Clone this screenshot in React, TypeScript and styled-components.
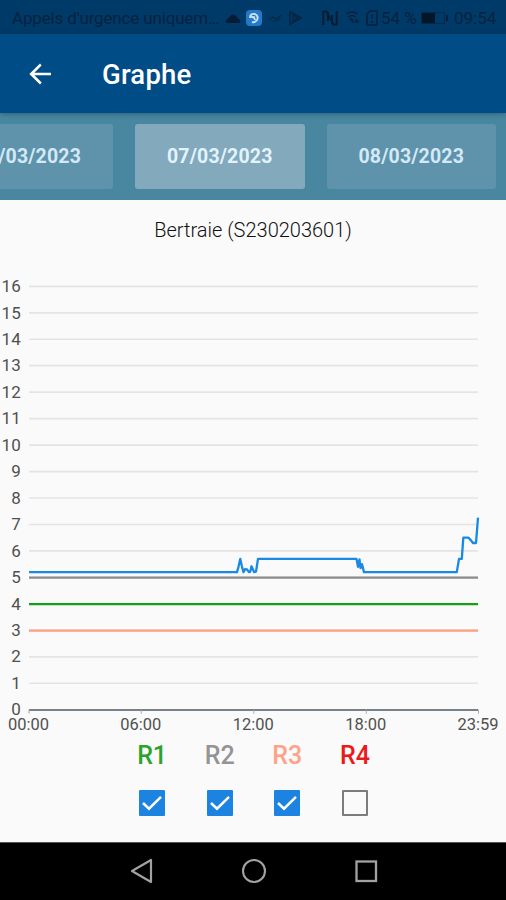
import React, { useState } from "react";
import styled, { createGlobalStyle } from "styled-components";

const GlobalStyle = createGlobalStyle`
  * { box-sizing: border-box; }
  body { margin: 0; background: #fafafa; font-family: Roboto, "Liberation Sans", sans-serif; }
`;

const Screen = styled.div`
  width: 506px;
  height: 900px;
  display: flex;
  flex-direction: column;
  overflow: hidden;
  background: #fafafa;
`;

const StatusBar = styled.div`
  height: 34px;
  flex: none;
  display: flex;
  align-items: center;
  padding: 2px 0 0 12px;
  background: #003a68;
  color: #06223f;
  font-size: 17px;
  white-space: nowrap;
`;

const StatusText = styled.span<{ $width: number; $spacing?: number; $gap?: number }>`
  width: ${(p) => p.$width}px;
  flex: none;
  margin-left: ${(p) => p.$gap ?? 0}px;
  letter-spacing: ${(p) => p.$spacing ?? 0}px;
`;

const StatusIcon = styled.svg<{ $gap: number }>`
  flex: none;
  display: block;
  margin-left: ${(p) => p.$gap}px;
  overflow: visible;
`;

const AppBar = styled.header`
  height: 79px;
  flex: none;
  display: flex;
  align-items: center;
  padding-left: 24px;
  gap: 46px;
  background: #004c87;
  z-index: 1;
  box-shadow: 0 1px 5px rgba(0, 40, 60, 0.4);
`;

const BackButton = styled.button`
  width: 32px;
  height: 32px;
  padding: 0;
  border: 0;
  background: none;
  svg { display: block; }
`;

const Title = styled.h1`
  margin: 2px 0 0;
  color: #fff;
  font-size: 27.5px;
  line-height: 32px;
  font-weight: 500;
  letter-spacing: 0.2px;
`;

const DateStrip = styled.nav`
  height: 87px;
  flex: none;
  display: flex;
  justify-content: flex-end;
  gap: 22px;
  padding: 11px 10px 11px 0;
  background: #4987a0;
  overflow: hidden;
`;

const DateButton = styled.button<{ $active?: boolean }>`
  width: 169.5px;
  height: 65px;
  flex: none;
  padding: 0;
  border: 0;
  border-radius: 3px;
  background: ${(p) => (p.$active ? "#82a9bc" : "#5e93ab")};
  color: ${(p) => (p.$active ? "#e3f3fc" : "#d3e9f6")};
  font: 700 19.5px Roboto, sans-serif;
  letter-spacing: 0.15px;
`;

const Content = styled.main`
  flex: 1;
  display: flex;
  flex-direction: column;
  align-items: center;
`;

const StationName = styled.h2`
  margin: 18px 0 0;
  height: 24px;
  font-size: 20px;
  line-height: 24px;
  font-weight: 300;
  color: #111;
  letter-spacing: 0;
`;

const ChartSvg = styled.svg`
  display: block;
  flex: none;
  margin-top: 25px;
`;

const AxisLabel = styled.text`
  font-family: Roboto, sans-serif;
  font-size: 17px;
  fill: #505050;
`;

const Legend = styled.div`
  display: flex;
  margin: 3px 0 0 1px;
`;

const LegendItem = styled.label`
  width: 67.6px;
  display: flex;
  flex-direction: column;
  align-items: center;
`;

const LegendName = styled.span<{ $color: string }>`
  color: ${(p) => p.$color};
  font-size: 25px;
  line-height: 30px;
  height: 30px;
  font-weight: 500;
`;

const Box = styled.button<{ $checked: boolean }>`
  width: 26px;
  height: 26px;
  margin-top: 19px;
  padding: 0;
  border: ${(p) => (p.$checked ? "0" : "2.5px solid #7c7c7c")};
  border-radius: 1px;
  background: ${(p) => (p.$checked ? "#1c84e0" : "transparent")};
  svg { display: block; }
`;

const NavBar = styled.footer`
  height: 58px;
  flex: none;
  display: flex;
  justify-content: center;
  align-items: center;
  gap: 88px;
  padding: 0 0 2px 1px;
  background: #000;
  border-top: 1px solid #555;
  svg { display: block; overflow: visible; }
`;

const TOP = 267;
const X0 = 29;
const X1 = 478;
const yOf = (v: number) => 709.7 - TOP - v * 26.46;

const levels: [number, number][] = [
  [29, 5.2], [237, 5.2], [238.5, 5.4], [240.3, 5.7], [242, 5.4], [243.5, 5.2],
  [245, 5.31], [247, 5.3], [249, 5.2], [250.3, 5.22], [251.5, 5.42], [253, 5.3],
  [254, 5.2], [256, 5.22], [258, 5.7], [356.5, 5.7], [358, 5.4], [359.5, 5.68],
  [360.5, 5.35], [362, 5.5], [364, 5.2], [456.8, 5.2], [459, 5.7], [461.8, 5.7],
  [463.3, 6.5], [468.5, 6.5], [471, 6.4], [473, 6.3], [476, 6.3], [478, 7.26],
];

const ticks: [number, string][] = [
  [29, "00:00"], [141.3, "06:00"], [253.8, "12:00"], [366.3, "18:00"], [478.5, "23:59"],
];

const thresholds = [
  { name: "R1", level: 4, color: "#2ca32c", line: "#14a014" },
  { name: "R2", level: 5, color: "#949494", line: "#8b8b8b" },
  { name: "R3", level: 3, color: "#ffa287", line: "#ff9e82" },
  { name: "R4", level: 2, color: "#ea1a1a", line: "#ea1a1a" },
];

function LevelChart({ shown }: { shown: boolean[] }) {
  return (
    <ChartSvg width="506" height="471" viewBox="0 0 506 471">
      {Array.from({ length: 17 }, (_, n) => (
        <g key={n}>
          {n > 0 && (
            <line x1={X0} x2={X1} y1={yOf(n)} y2={yOf(n)} stroke="#e4e4e4" strokeWidth="1.7" />
          )}
          <AxisLabel x={20.7} y={yOf(n) + 5.7} textAnchor="end">{n}</AxisLabel>
        </g>
      ))}
      {thresholds.map((t, i) =>
        shown[i] ? (
          <line key={t.name} x1={X0} x2={X1} y1={yOf(t.level) + 0.3} y2={yOf(t.level) + 0.3} stroke={t.line} strokeWidth="2.2" />
        ) : null
      )}
      <polyline
        points={levels.map(([x, v]) => `${x},${yOf(v)}`).join(" ")}
        fill="none"
        stroke="#1889e5"
        strokeWidth="2.3"
        strokeLinejoin="round"
      />
      <line x1={X0} x2={X1} y1={yOf(0) + 0.3} y2={yOf(0) + 0.3} stroke="#78808a" strokeWidth="2" />
      {ticks.map(([x, label]) => (
        <g key={label}>
          <line x1={x} x2={x} y1={yOf(0)} y2={yOf(0) + 4} stroke="#aaa" strokeWidth="1" />
          <AxisLabel x={x - 0.5} y={yOf(0) + 20} textAnchor="middle" textLength="41" lengthAdjust="spacingAndGlyphs">{label}</AxisLabel>
        </g>
      ))}
    </ChartSvg>
  );
}

export default function App() {
  const [shown, setShown] = useState([true, true, true, false]);
  const toggle = (i: number) => setShown((s) => s.map((v, j) => (j === i ? !v : v)));

  return (
    <Screen>
      <GlobalStyle />
      <StatusBar>
        <StatusText $width={207} $spacing={-0.16}>Appels d'urgence uniquem…</StatusText>
        <StatusIcon $gap={6} width="16" height="11" viewBox="0 0 16 11">
          <path d="M1 10Q0 6 4 5Q6 0 10 2Q12 3 12 5Q16 6 15 10Z" fill="#071d35" />
        </StatusIcon>
        <StatusIcon $gap={5} width="16" height="16" viewBox="0 0 16 16">
          <rect width="16" height="16" rx="4" fill="#2479c9" />
          <path d="M4 8Q4 3 9 4Q13 6 11 10Q9 13 6 12M4 5Q6 8 8 7L9 10" fill="none" stroke="#c9e2f6" strokeWidth="1.9" />
        </StatusIcon>
        <StatusIcon $gap={7} width="14" height="8" viewBox="0 0 14 8">
          <path d="M0 6L4 3L7 5L13 1M2 7H8L11 4" fill="none" stroke="#082846" strokeWidth="1.2" />
        </StatusIcon>
        <StatusIcon $gap={5} width="15" height="16" viewBox="0 0 15 16">
          <path d="M2 1.5L13.5 8L2 14.5ZM5 4V12L11 6M5 4L11 10" fill="none" stroke="#07223e" strokeWidth="1.4" strokeLinejoin="round" />
        </StatusIcon>
        <StatusIcon $gap={19} width="16" height="16" viewBox="0 0 16 16">
          <path d="M1.3 15V1.5H4.5L6 3V11M10 5V13L11.5 14.5H14.7V1" fill="none" stroke="#061c33" strokeWidth="2" />
          <path d="M5 3L11 13" stroke="#061c33" strokeWidth="1.6" />
        </StatusIcon>
        <StatusIcon $gap={7} width="16" height="14" viewBox="0 0 16 14">
          <path d="M1 3Q7 -1 13 3M3 6Q7 3 11 6M6 9L8 8M8 12V9M11 8V12M13 12V9M5 7L7 10" fill="none" stroke="#07223e" strokeWidth="1.5" />
        </StatusIcon>
        <StatusIcon $gap={5} width="12" height="16" viewBox="0 0 12 16">
          <path d="M4 1H11V15H1V4ZM6 4.5V9M6 11V13" fill="none" stroke="#06203a" strokeWidth="1.5" />
        </StatusIcon>
        <StatusText $gap={3} $width={37}>54 %</StatusText>
        <StatusIcon $gap={3} width="28" height="12" viewBox="0 0 28 12">
          <rect x="0.6" y="0.6" width="23" height="10.8" fill="none" stroke="#06294b" strokeWidth="1" />
          <rect x="1" y="1" width="13" height="10" fill="#031628" />
          <path d="M26 3V9" stroke="#06203a" strokeWidth="2" />
        </StatusIcon>
        <StatusText $gap={5} $width={43}>09:54</StatusText>
      </StatusBar>
      <AppBar>
        <BackButton aria-label="Retour">
          <svg width="32" height="32" viewBox="0 0 24 24">
            <path d="M20.2 11H7.8l5.4-5.4L12 4.2 4 12l8 7.8 1.3-1.4L7.8 13h12.4z" fill="#fff" />
          </svg>
        </BackButton>
        <Title>Graphe</Title>
      </AppBar>
      <DateStrip>
        <DateButton>06/03/2023</DateButton>
        <DateButton $active>07/03/2023</DateButton>
        <DateButton>08/03/2023</DateButton>
      </DateStrip>
      <Content>
        <StationName>Bertraie (S230203601)</StationName>
        <LevelChart shown={shown} />
        <Legend>
          {thresholds.map((t, i) => (
            <LegendItem key={t.name}>
              <LegendName $color={t.color}>{t.name}</LegendName>
              <Box $checked={shown[i]} role="checkbox" aria-checked={shown[i]} aria-label={t.name} onClick={() => toggle(i)}>
                {shown[i] && (
                  <svg width="26" height="26" viewBox="0 0 26 26">
                    <path d="M4 13L10 18.7L22 6.8" fill="none" stroke="#fff" strokeWidth="2.5" />
                  </svg>
                )}
              </Box>
            </LegendItem>
          ))}
        </Legend>
      </Content>
      <NavBar>
        <svg width="24" height="24" viewBox="0 0 24 24">
          <path d="M2 12L21 1V23Z" fill="none" stroke="#a2a2a2" strokeWidth="2.2" strokeLinejoin="round" />
        </svg>
        <svg width="24" height="24" viewBox="0 0 24 24">
          <circle cx="12" cy="12" r="11" fill="none" stroke="#a2a2a2" strokeWidth="2.1" />
        </svg>
        <svg width="24" height="24" viewBox="0 0 24 24">
          <rect x="2.5" y="2.5" width="19.5" height="19.5" fill="none" stroke="#a2a2a2" strokeWidth="2.3" />
        </svg>
      </NavBar>
    </Screen>
  );
}
